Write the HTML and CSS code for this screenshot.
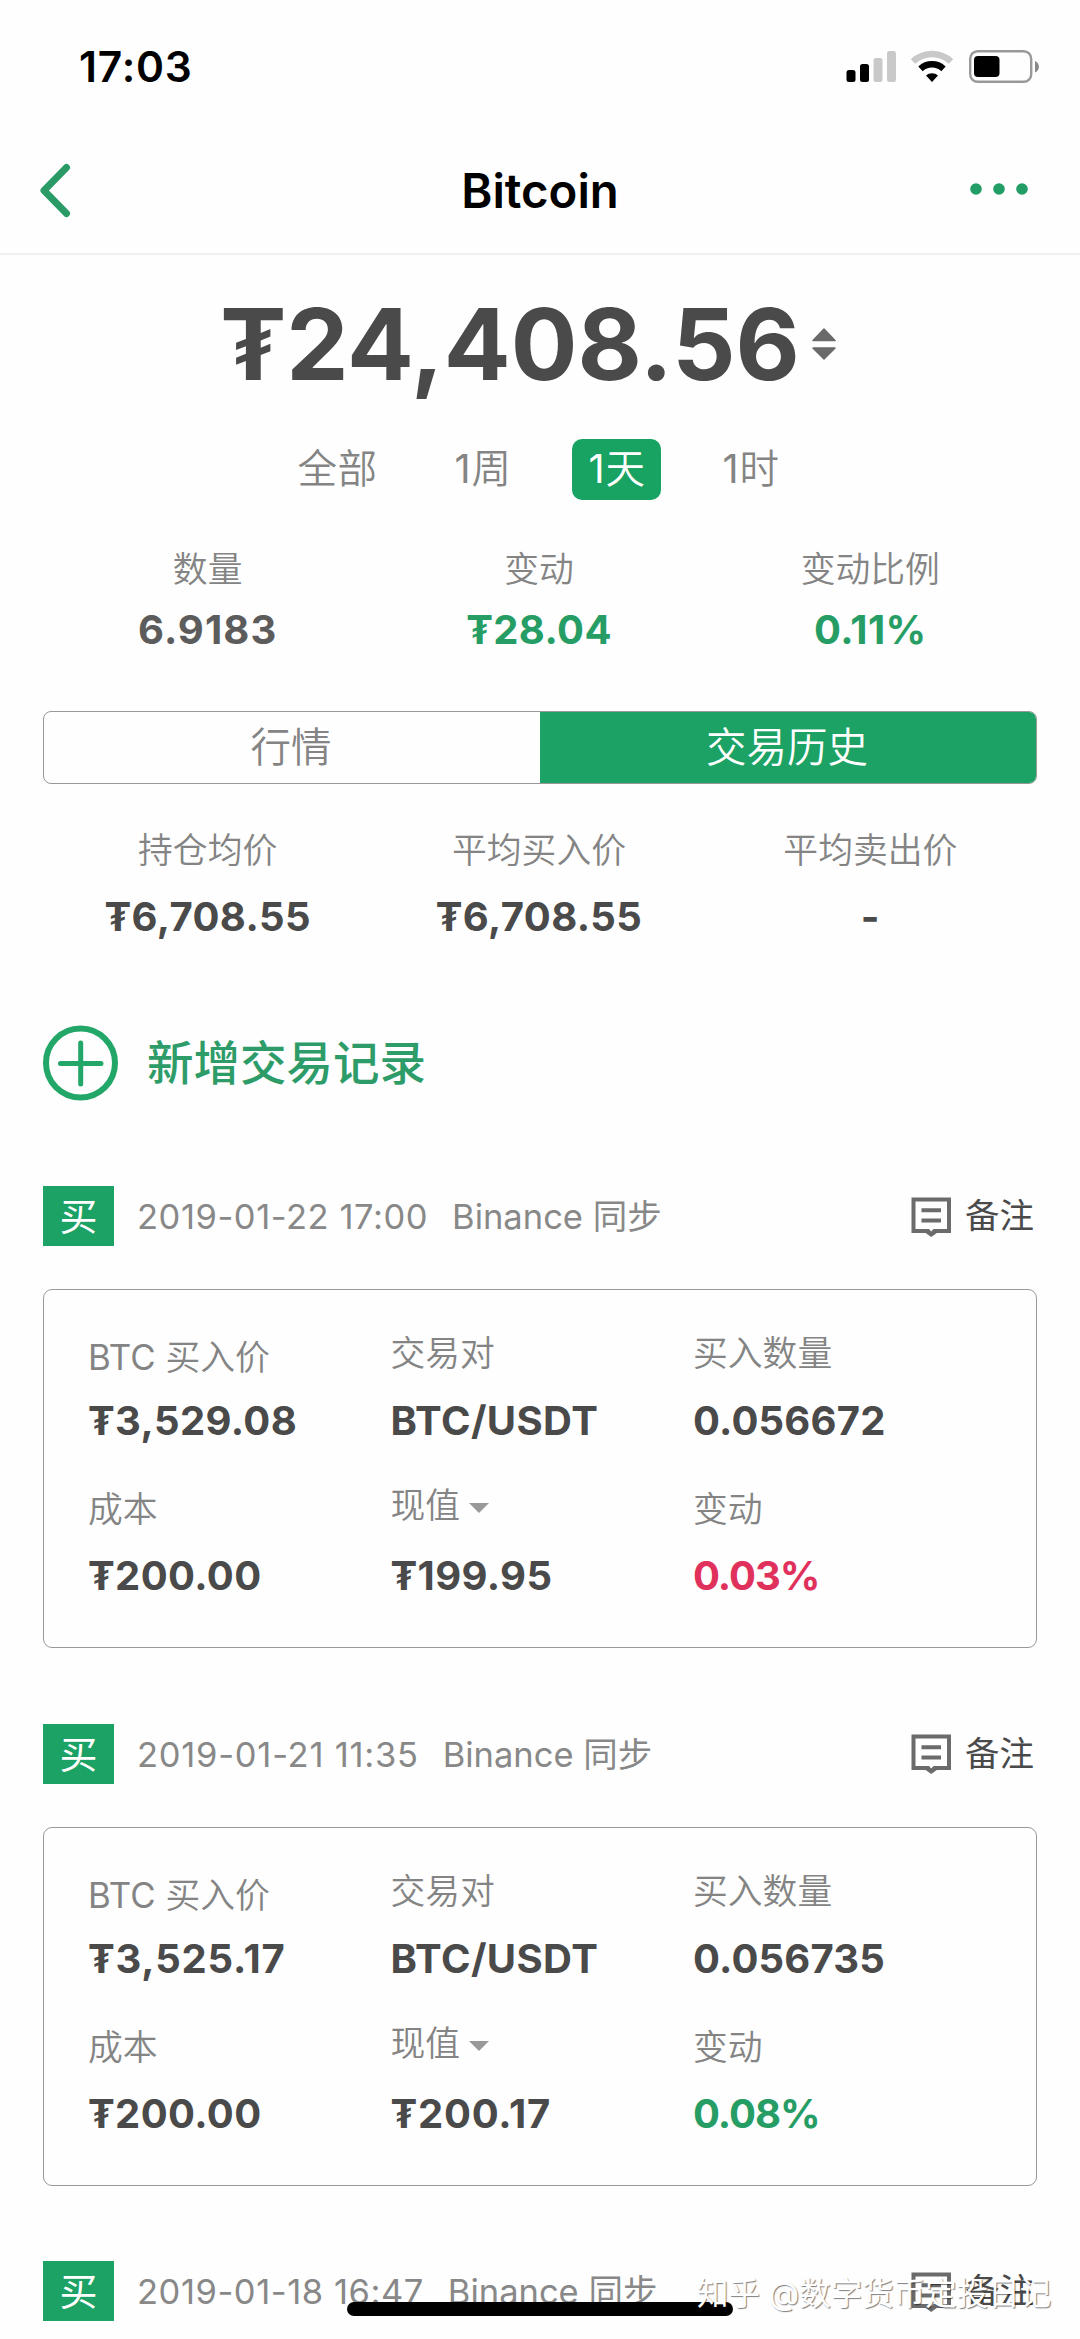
FILE: index.html
```html
<!DOCTYPE html>
<html lang="zh-CN">
<head>
<meta charset="utf-8">
<meta name="viewport" content="width=1080">
<title>Bitcoin</title>
<link rel="stylesheet" href="styles.css">
</head>
<body>
<svg class="defs" width="0" height="0" aria-hidden="true">
  <symbol id="note" viewBox="0 0 40 41">
    <path d="M2.500 3.500h35.500v31.500H2.500z" fill="none" stroke="#6b6b6b" stroke-width="4"/>
    <path d="M14 36.500h12.500L20.200 41z" fill="#6b6b6b"/>
    <path d="M17.500 32.500h5.500l-2.700 3z" fill="#fefefe"/>
    <path d="M10.500 14.300h19.500M10.500 24.500h19.500" stroke="#6b6b6b" stroke-width="4"/>
  </symbol>
</svg>
<div class="screen">
  <header class="status">
    <span class="time">17:03</span>
    <svg class="indicators" viewBox="0 0 194 34" width="194" height="34">
      <rect x="0.500" y="20" width="9" height="12" rx="2.500"/>
      <rect x="14" y="14" width="9" height="18" rx="2.500"/>
      <rect x="27.500" y="8" width="9" height="24" rx="2.500" fill="#c9c9c9"/>
      <rect x="41" y="1" width="9" height="31" rx="2.500" fill="#c9c9c9"/>
      <path d="M67 11.500a27.500 27.500 0 0 1 38 0" fill="none" stroke="#c9c9c9" stroke-width="6.500"/>
      <path d="M74.500 18.800a17 17 0 0 1 23 0" fill="none" stroke="#000" stroke-width="6.500"/>
      <path d="M80 25.500a9 9 0 0 1 12 0L86 32z"/>
      <rect x="124.200" y="1.200" width="61" height="30.600" rx="7.500" fill="none" stroke="#999" stroke-width="2.400"/>
      <rect x="128" y="6" width="25.500" height="21" rx="4"/>
      <path d="M189 11c5.200 2.500 5.200 9 0 11.500z" fill="#888"/>
    </svg>
  </header>
  <nav class="nav">
    <svg width="34" height="58" viewBox="0 0 34 58"><path d="M28.500 5.500 6 28.500l22.500 23" fill="none" stroke="#2a9b66" stroke-width="7" stroke-linecap="round" stroke-linejoin="round"/></svg>
    <h1 class="title">Bitcoin</h1>
    <svg class="more" width="60" height="14" viewBox="0 0 60 14" fill="#239d66"><circle cx="7" cy="7" r="5.800"/><circle cx="30" cy="7" r="5.800"/><circle cx="53" cy="7" r="5.800"/></svg>
  </nav>
  <main class="content">
    <div class="total">
      <span class="total-value">₮24,408.56</span>
      <svg width="24" height="34" viewBox="0 0 24 34" fill="#6a6a6a" stroke="#6a6a6a" stroke-width="1.500" stroke-linejoin="round"><path d="M12 2 23 13.500H1zM12 32 23 21H1z"/></svg>
    </div>
    <div class="periods">
      <span class="period">全部</span>
      <span class="period"><b>1</b>周</span>
      <span class="period active"><b>1</b>天</span>
      <span class="period"><b>1</b>时</span>
    </div>
    <div class="stats">
      <div class="stat"><span class="label">数量</span><span class="value soft">6.9183</span></div>
      <div class="stat"><span class="label">变动</span><span class="value up">₮28.04</span></div>
      <div class="stat"><span class="label">变动比例</span><span class="value up">0.11%</span></div>
    </div>
    <div class="segments">
      <span class="segment">行情</span>
      <span class="segment selected">交易历史</span>
    </div>
    <div class="stats averages">
      <div class="stat"><span class="label">持仓均价</span><span class="value">₮6,708.55</span></div>
      <div class="stat"><span class="label">平均买入价</span><span class="value">₮6,708.55</span></div>
      <div class="stat"><span class="label">平均卖出价</span><span class="value">-</span></div>
    </div>
    <div class="add">
      <svg width="76" height="76" viewBox="0 0 76 76" fill="none" stroke="#22a768" stroke-linecap="round"><circle cx="37.500" cy="38" r="34.500" stroke-width="6"/><path d="M17.500 38.500h40.500M37.700 18v41" stroke-width="5"/></svg>
      <span class="add-text">新增交易记录</span>
    </div>

    <section class="entry">
      <div class="entry-head">
        <span class="tag">买</span><span class="date">2019-01-22 17:00</span><span class="source">Binance 同步</span>
        <svg class="note-icon" width="40" height="41"><use href="#note"/></svg><span class="note">备注</span>
      </div>
      <div class="card">
        <div class="cell"><span class="label low"><b>BTC</b> 买入价</span><span class="value">₮3,529.08</span></div>
        <div class="cell"><span class="label">交易对</span><span class="value">BTC/USDT</span></div>
        <div class="cell"><span class="label">买入数量</span><span class="value amount">0.056672</span></div>
        <div class="cell"><span class="label low">成本</span><span class="value">₮200.00</span></div>
        <div class="cell"><span class="label">现值<i class="caret"></i></span><span class="value">₮199.95</span></div>
        <div class="cell"><span class="label low">变动</span><span class="value percent down">0.03%</span></div>
      </div>
    </section>

    <section class="entry">
      <div class="entry-head">
        <span class="tag">买</span><span class="date narrow">2019-01-21 11:35</span><span class="source">Binance 同步</span>
        <svg class="note-icon" width="40" height="41"><use href="#note"/></svg><span class="note">备注</span>
      </div>
      <div class="card">
        <div class="cell"><span class="label low"><b>BTC</b> 买入价</span><span class="value narrow">₮3,525.17</span></div>
        <div class="cell"><span class="label">交易对</span><span class="value">BTC/USDT</span></div>
        <div class="cell"><span class="label">买入数量</span><span class="value amount">0.056735</span></div>
        <div class="cell"><span class="label low">成本</span><span class="value">₮200.00</span></div>
        <div class="cell"><span class="label">现值<i class="caret"></i></span><span class="value narrow">₮200.17</span></div>
        <div class="cell"><span class="label low">变动</span><span class="value percent up">0.08%</span></div>
      </div>
    </section>

    <section class="entry">
      <div class="entry-head">
        <span class="tag">买</span><span class="date">2019-01-18 16:47</span><span class="source">Binance 同步</span>
        <svg class="note-icon" width="40" height="41"><use href="#note"/></svg><span class="note">备注</span>
      </div>
    </section>
  </main>
  <div class="home-bar"></div>
  <div class="watermark">知乎 @数字货币定投日记</div>
</div>
</body>
</html>
```

FILE: styles.css
```css
* { box-sizing: border-box; }
body {
  margin: 0;
  background: #fefefe;
  color: #4a4a4a;
  font-family: Inter, "Noto Sans CJK SC", sans-serif;
}
svg { display: block; flex: none; }
b { font-weight: 400; }
.defs { position: absolute; }
.screen { position: relative; width: 1080px; height: 2339px; overflow: hidden; }

.status {
  display: flex;
  justify-content: space-between;
  height: 128px;
  padding: 50px 40px 0 79px;
  color: #000;
}
.time { font-size: 42.5px; font-weight: 600; line-height: 33px; letter-spacing: .8px; }

.nav {
  display: grid;
  grid-template-columns: 1fr auto 1fr;
  align-items: center;
  height: 127px;
  padding: 0 51px 0 38px;
  border-bottom: 2px solid #f0f0f0;
}
.title { margin: 0 -13px 0 0; color: #000; font-size: 47.3px; font-weight: 600; line-height: 60px; }
.more { justify-self: end; margin-bottom: 3px; }

.content { padding: 0 43px; }
.total {
  display: flex;
  align-items: center;
  justify-content: center;
  gap: 12px;
  height: 176px;
  padding: 1px 24px 0 0;
}
.total-value { font-size: 99px; font-weight: 700; line-height: 120px; }

.periods {
  display: flex;
  justify-content: center;
  gap: 45px;
  margin: 8px 3px 0 0;
  color: #848484;
}
.period { padding: 0 16px; font-size: 39.5px; font-weight: 350; line-height: 61px; letter-spacing: .4px; border-radius: 10px; }
.period b { letter-spacing: 1px; }
.active { background: #18a362; color: #fff; }

.stats { display: grid; grid-template-columns: repeat(3, 1fr); margin-top: 45px; }
.stat { display: flex; flex-direction: column; align-items: center; margin-left: -2px; }
.label { color: #848484; font-size: 34.8px; font-weight: 350; line-height: 48px; white-space: nowrap; }
.value { font-size: 40px; font-weight: 700; line-height: 48px; letter-spacing: .4px; white-space: nowrap; }
.stats .value { margin-top: 13px; }
.soft { color: #5c5c5c; }
.stats .soft { letter-spacing: 1.1px; }
.up { color: #279d66; }
.down { color: #e0315c; }
.amount { letter-spacing: .2px; }
.value.narrow { letter-spacing: .8px; }
.value.percent { letter-spacing: -1px; }

.segments {
  display: flex;
  height: 73px;
  margin-top: 57px;
  border: 1px solid #999;
  border-radius: 8px;
  overflow: hidden;
}
.segment { flex: 1; padding-right: 3px; color: #848484; font-size: 40.5px; font-weight: 350; line-height: 72px; text-align: center; }
.selected { background: #1ba264; color: #fff; margin: -1px; line-height: 74px; }

.averages { margin-top: 42px; }
.averages .value { margin-top: 19px; }

.add { display: flex; align-items: center; gap: 28px; height: 76px; margin-top: 84px; }
.add-text { color: #2e9c69; font-size: 46.5px; font-weight: 500; line-height: 60px; }

.entry { margin-top: 85px; }
.entry + .entry { margin-top: 75.5px; }
.entry-head { display: flex; align-items: center; height: 60px; font-size: 34.5px; color: #888; line-height: 60px; }
.tag { width: 71px; background: #1ba264; color: #fff; font-size: 38px; text-align: center; }
.date { margin-left: 23px; padding-top: 2px; letter-spacing: .55px; }
.date.narrow { letter-spacing: .75px; }
.source { margin-left: 24px; padding-top: 2px; }
.note-icon { margin-left: auto; }
.note { margin: 0 3px 0 14px; color: #4a4a4a; }

.card {
  display: grid;
  grid-template-columns: 302.5px 302.5px 1fr;
  grid-template-rows: 152px 1fr;
  height: 359px;
  margin-top: 43px;
  padding: 39px 0 0 44px;
  border: 1px solid #999;
  border-radius: 9px;
}
.cell { display: flex; flex-direction: column; }
.cell .label { position: relative; }
.cell .low { top: 4px; }
.cell .value { margin-top: 20px; }
.cell:nth-child(n + 4) .value { margin-top: 23px; }
.caret {
  display: inline-block;
  margin-left: 9px;
  border: 10px solid transparent;
  border-top-color: #999;
  border-bottom: 0;
  vertical-align: 5px;
}

.home-bar { position: absolute; left: 347px; top: 2302px; width: 386px; height: 14px; border-radius: 7px; background: #000; }
.watermark {
  position: absolute;
  left: 697px;
  top: 2270px;
  color: #fff;
  font-size: 31.5px;
  line-height: 48px;
  white-space: nowrap;
  text-shadow: 1px 1px 1px rgba(0, 0, 0, .5);
}
```
